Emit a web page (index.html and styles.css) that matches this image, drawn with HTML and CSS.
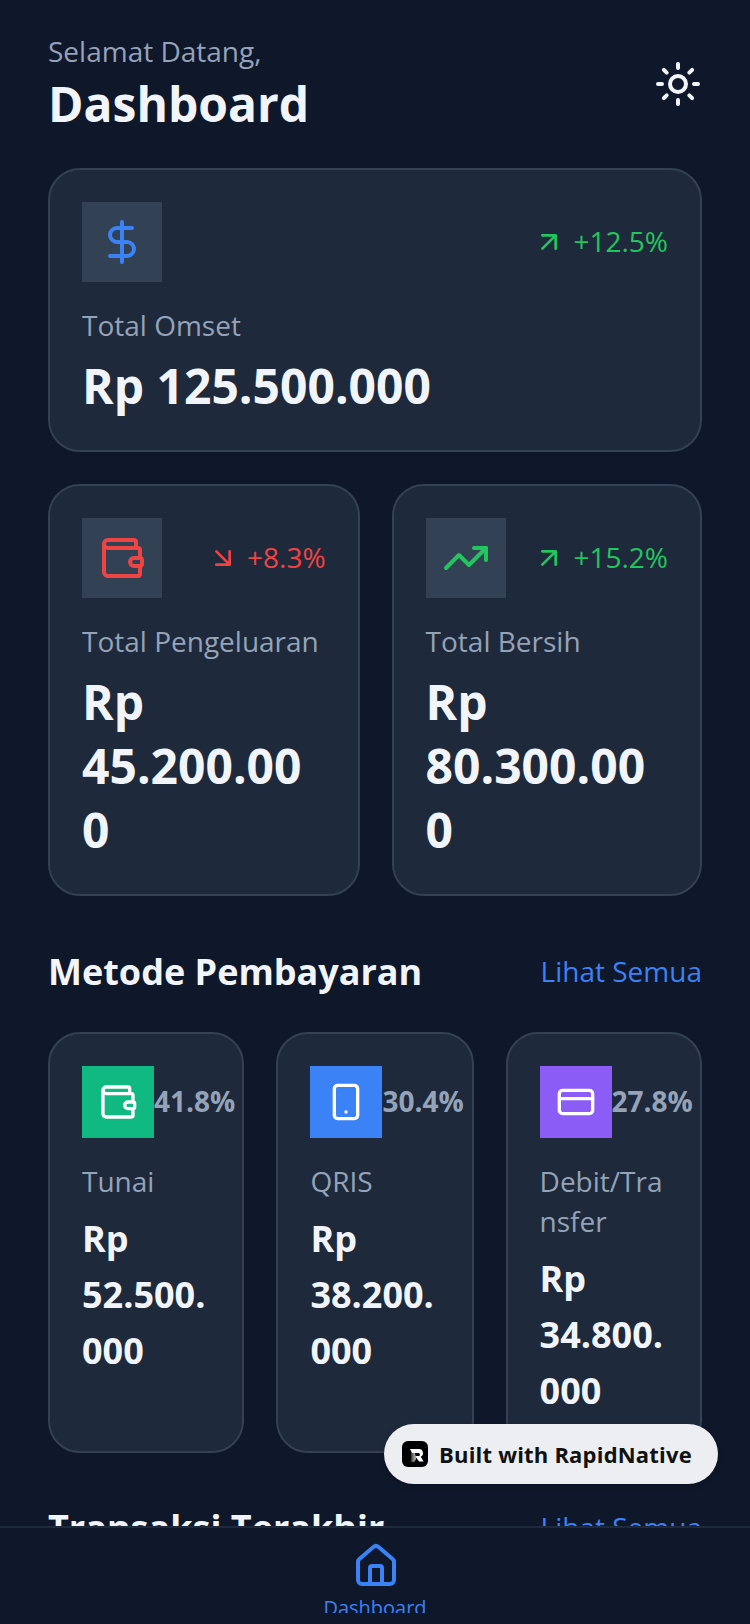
FILE: index.html
```html
<!DOCTYPE html>
<html>
<head>
  <title>Dashboard</title>
  <link rel="stylesheet" href="styles.css">
</head>
<body>
  <div class="app">
    <main class="content">
      <header class="header">
        <div>
          <p class="greeting">Selamat Datang,</p>
          <h1 class="title">Dashboard</h1>
        </div>
        <svg class="theme-icon" viewBox="0 0 24 24" fill="none" stroke="#f1f5f9" stroke-width="2" stroke-linecap="round" stroke-linejoin="round">
          <circle cx="12" cy="12" r="4"/>
          <path d="M12 2v2M12 20v2M4.93 4.93l1.41 1.41M17.66 17.66l1.41 1.41M2 12h2M20 12h2M6.34 17.66l-1.41 1.41M19.07 4.93l-1.41 1.41"/>
        </svg>
      </header>

      <section class="card card-wide">
        <div class="card-top">
          <div class="icon-box">
            <svg class="icon" viewBox="0 0 24 24" fill="none" stroke="#3b82f6" stroke-width="2" stroke-linecap="round" stroke-linejoin="round">
              <path d="M12 2v20M17 5H9.5a3.5 3.5 0 0 0 0 7h5a3.5 3.5 0 0 1 0 7H6"/>
            </svg>
          </div>
          <div class="trend up">
            <svg class="trend-icon" viewBox="0 0 24 24" fill="none" stroke="currentColor" stroke-width="2" stroke-linecap="round" stroke-linejoin="round"><path d="M7 17 17 7M7 7h10v10"/></svg>
            <span class="trend-text">+12.5%</span>
          </div>
        </div>
        <p class="label">Total Omset</p>
        <p class="amount">Rp 125.500.000</p>
      </section>

      <div class="two-cols">
        <section class="card">
          <div class="card-top">
            <div class="icon-box">
              <svg class="icon" viewBox="0 0 24 24" fill="none" stroke="#ef4444" stroke-width="2" stroke-linecap="round" stroke-linejoin="round">
                <path d="M19 7V4a1 1 0 0 0-1-1H5a2 2 0 0 0 0 4h15a1 1 0 0 1 1 1v4h-3a2 2 0 0 0 0 4h3a1 1 0 0 0 1-1v-2a1 1 0 0 0-1-1"/>
                <path d="M3 5v14a2 2 0 0 0 2 2h15a1 1 0 0 0 1-1v-4"/>
              </svg>
            </div>
            <div class="trend down">
              <svg class="trend-icon" viewBox="0 0 24 24" fill="none" stroke="currentColor" stroke-width="2" stroke-linecap="round" stroke-linejoin="round"><path d="M7 7l10 10M17 7v10H7"/></svg>
              <span class="trend-text">+8.3%</span>
            </div>
          </div>
          <p class="label">Total Pengeluaran</p>
          <p class="amount">Rp 45.200.000</p>
        </section>

        <section class="card">
          <div class="card-top">
            <div class="icon-box">
              <svg class="icon" viewBox="0 0 24 24" fill="none" stroke="#22c55e" stroke-width="2" stroke-linecap="round" stroke-linejoin="round">
                <path d="M22 7l-8.5 8.5-5-5L2 17"/>
                <path d="M16 7h6v6"/>
              </svg>
            </div>
            <div class="trend up">
              <svg class="trend-icon" viewBox="0 0 24 24" fill="none" stroke="currentColor" stroke-width="2" stroke-linecap="round" stroke-linejoin="round"><path d="M7 17 17 7M7 7h10v10"/></svg>
              <span class="trend-text">+15.2%</span>
            </div>
          </div>
          <p class="label">Total Bersih</p>
          <p class="amount">Rp 80.300.000</p>
        </section>
      </div>

      <div class="section-head">
        <h2 class="section-title">Metode Pembayaran</h2>
        <a class="see-all">Lihat Semua</a>
      </div>

      <div class="three-cols">
        <section class="card method">
          <div class="method-top">
            <div class="method-icon green">
              <svg class="method-svg" viewBox="0 0 24 24" fill="none" stroke="#fff" stroke-width="2" stroke-linecap="round" stroke-linejoin="round">
                <path d="M19 7V4a1 1 0 0 0-1-1H5a2 2 0 0 0 0 4h15a1 1 0 0 1 1 1v4h-3a2 2 0 0 0 0 4h3a1 1 0 0 0 1-1v-2a1 1 0 0 0-1-1"/>
                <path d="M3 5v14a2 2 0 0 0 2 2h15a1 1 0 0 0 1-1v-4"/>
              </svg>
            </div>
            <span class="percent">41.8%</span>
          </div>
          <p class="label">Tunai</p>
          <p class="method-amount">Rp 52.500.000</p>
        </section>

        <section class="card method">
          <div class="method-top">
            <div class="method-icon blue">
              <svg class="method-svg" viewBox="0 0 24 24" fill="none" stroke="#fff" stroke-width="2" stroke-linecap="round" stroke-linejoin="round">
                <rect x="5" y="2" width="14" height="20" rx="2"/>
                <path d="M12 18h.01"/>
              </svg>
            </div>
            <span class="percent">30.4%</span>
          </div>
          <p class="label">QRIS</p>
          <p class="method-amount">Rp 38.200.000</p>
        </section>

        <section class="card method">
          <div class="method-top">
            <div class="method-icon purple">
              <svg class="method-svg" viewBox="0 0 24 24" fill="none" stroke="#fff" stroke-width="2" stroke-linecap="round" stroke-linejoin="round">
                <rect x="2" y="5" width="20" height="14" rx="2"/>
                <path d="M2 10h20"/>
              </svg>
            </div>
            <span class="percent">27.8%</span>
          </div>
          <p class="label">Debit/Transfer</p>
          <p class="method-amount">Rp 34.800.000</p>
        </section>
      </div>

      <div class="section-head recent">
        <h2 class="section-title">Transaksi Terakhir</h2>
        <a class="see-all">Lihat Semua</a>
      </div>
    </main>

    <nav class="tabbar">
      <div class="tab">
        <svg class="tab-icon" viewBox="0 0 24 24" fill="none" stroke="#3b82f6" stroke-width="2" stroke-linecap="round" stroke-linejoin="round">
          <path d="M15 21v-8a1 1 0 0 0-1-1h-4a1 1 0 0 0-1 1v8"/>
          <path d="M3 10a2 2 0 0 1 .71-1.53l7-6a2 2 0 0 1 2.58 0l7 6A2 2 0 0 1 21 10v9a2 2 0 0 1-2 2H5a2 2 0 0 1-2-2z"/>
        </svg>
        <span class="tab-label">Dashboard</span>
      </div>
    </nav>

    <div class="badge">
      <span class="badge-logo">
        <svg viewBox="0 0 26 26" width="26" height="26">
          <defs>
            <linearGradient id="logo-fade" x1="0" y1="0" x2="1" y2="0">
              <stop offset="0" stop-color="#333"/>
              <stop offset="1" stop-color="#ccc"/>
            </linearGradient>
          </defs>
          <path d="M8 8h9a4 4 0 0 1 1.7 7.600L21.500 20.500h-4.400L13 15h3.500a1.400 1.400 0 0 0 0-3H10z" fill="#fff"/>
          <path d="M9 12h4l1 6-2 3h-3z" fill="url(#logo-fade)"/>
        </svg>
      </span>
      <span class="badge-text">Built with RapidNative</span>
    </div>
  </div>
</body>
</html>
```

FILE: styles.css
```css
* {
  box-sizing: border-box;
}

html, body {
  margin: 0;
  padding: 0;
}

body {
  background-color: #0f172a;
  color: #f1f5f9;
  font-family: "Open Sans", "Noto Sans", sans-serif;
}

p, h1, h2 {
  margin: 0;
}

.app {
  position: relative;
  width: 750px;
  height: 1624px;
  display: flex;
  flex-direction: column;
  overflow: hidden;
}

.content {
  flex: 1;
  min-height: 0;
  overflow: hidden;
  padding: 32px 48px 0;
}

.header {
  display: flex;
  justify-content: space-between;
  align-items: center;
  margin-bottom: 32px;
}

.greeting {
  font-size: 28px;
  line-height: 40px;
  margin-top: -1px;
  margin-bottom: 1px;
  color: #94a3b8;
}

.title {
  font-size: 48px;
  line-height: 64px;
  font-weight: 700;
}

.theme-icon {
  width: 48px;
  height: 48px;
}

.card {
  background-color: #1e293b;
  border: 2px solid #334155;
  border-radius: 32px;
  padding: 32px;
}

.card-wide {
  height: 284px;
  margin-bottom: 32px;
}

.card-top {
  display: flex;
  justify-content: space-between;
  align-items: center;
  margin-bottom: 23px;
}

.icon-box {
  width: 80px;
  height: 80px;
  background-color: #334155;
  display: flex;
  justify-content: center;
  align-items: center;
}

.icon {
  width: 48px;
  height: 48px;
}

.trend {
  display: flex;
  align-items: center;
  gap: 8px;
  font-size: 28px;
}

.trend-text {
  margin-top: -2px;
}

.up {
  color: #22c55e;
}

.down {
  color: #ef4444;
}

.trend-icon {
  width: 32px;
  height: 32px;
}

.label {
  font-size: 28px;
  line-height: 40px;
  color: #94a3b8;
}

.amount {
  font-size: 48px;
  line-height: 64px;
  font-weight: 700;
  margin-top: 9px;
  word-break: break-word;
}

.two-cols {
  display: grid;
  grid-template-columns: 311.6px 310.4px;
  gap: 32px;
  height: 412px;
  margin-bottom: 48px;
}

.section-head {
  display: flex;
  justify-content: space-between;
  align-items: center;
  margin-bottom: 32px;
}

.section-title {
  font-size: 36px;
  line-height: 56px;
  font-weight: 700;
}

.see-all {
  font-size: 28px;
  margin-top: -2px;
  color: #3b82f6;
}

.three-cols {
  display: grid;
  grid-template-columns: 196.4px 197.2px 196.4px;
  gap: 32px;
  height: 420px;
  margin-bottom: 48px;
}

.method .label {
  word-break: break-all;
}

.method-top {
  display: flex;
  align-items: center;
  margin-bottom: 23px;
}

.method-icon {
  flex: none;
  width: 72px;
  height: 72px;
  display: flex;
  justify-content: center;
  align-items: center;
}

.green {
  background-color: #10b981;
}

.blue {
  background-color: #3b82f6;
}

.purple {
  background-color: #8b5cf6;
}

.method-svg {
  width: 40px;
  height: 40px;
}

.percent {
  flex: none;
  font-size: 28px;
  font-weight: 700;
  margin-top: -2px;
  color: #94a3b8;
}

.method-amount {
  font-size: 36px;
  line-height: 56px;
  font-weight: 700;
  margin-top: 10px;
  word-break: break-word;
}

.tabbar {
  flex: none;
  height: 98px;
  background-color: #0f172a;
  border-top: 2px solid #1e293b;
  display: flex;
  justify-content: center;
}

.tab {
  height: 85px;
  overflow: hidden;
  display: flex;
  flex-direction: column;
  align-items: center;
  padding-top: 14px;
}

.tab-icon {
  flex: none;
  width: 48px;
  height: 48px;
  margin-left: 2px;
}

.tab-label {
  font-size: 20px;
  line-height: 28px;
  margin-top: 4px;
  color: #3b82f6;
}

.badge {
  position: absolute;
  left: 384px;
  top: 1424px;
  width: 334px;
  height: 60px;
  border-radius: 30px;
  background-color: #eceef2;
  display: flex;
  align-items: center;
  gap: 11px;
  padding-left: 18px;
  box-shadow: 0 2px 6px rgba(0, 0, 0, 0.2);
}

.badge-logo {
  width: 26px;
  height: 26px;
  border-radius: 6px;
  background-color: #000;
  display: flex;
}

.badge-text {
  font-size: 22px;
  font-weight: 700;
  letter-spacing: 0.2px;
  color: #111;
}
```
